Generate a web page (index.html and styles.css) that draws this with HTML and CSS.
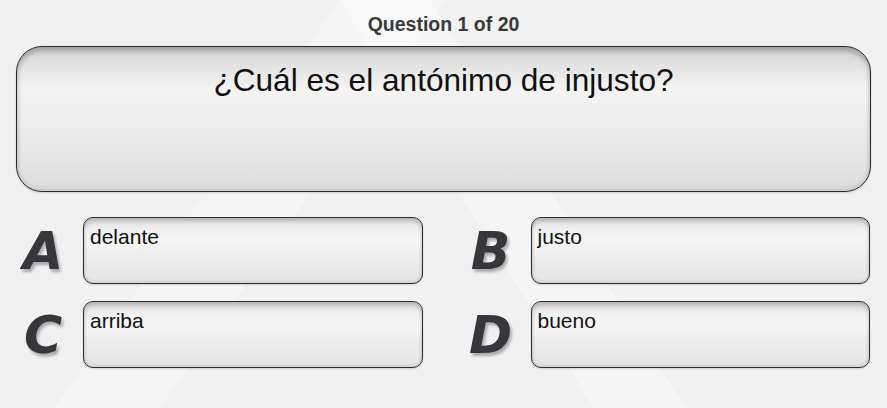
FILE: index.html
```html
<!DOCTYPE html>
<html>
	<head>
		<meta charset="utf-8">
		<title>Quiz</title>
		<link rel="stylesheet" href="styles.css">
	</head>
	<body>
		<div class="counter">Question 1 of 20</div>
		<div class="question">¿Cuál es el antónimo de injusto?</div>
		<div class="answers">
			<div class="answer">
				<span class="letter">A</span>
				<div class="answer_box">delante</div>
			</div>
			<div class="answer">
				<span class="letter">B</span>
				<div class="answer_box">justo</div>
			</div>
			<div class="answer">
				<span class="letter">C</span>
				<div class="answer_box">arriba</div>
			</div>
			<div class="answer">
				<span class="letter">D</span>
				<div class="answer_box">bueno</div>
			</div>
		</div>
	</body>
</html>
```

FILE: styles.css
```css
body {
    margin: 0;
    height: 408px;
    overflow: hidden;
    font-family: "Liberation Sans", Arial, sans-serif;
    background-color: #f1f1f1;
    /* faint watermark bands behind the answers */
    background-image:
        linear-gradient(58deg, transparent 52%, rgba(255,255,255,.35) 52%, rgba(255,255,255,.35) 60%, transparent 60%),
        linear-gradient(-55deg, transparent 62%, rgba(255,255,255,.3) 62%, rgba(255,255,255,.3) 71%, transparent 71%);
}
.counter {
    padding-top: 13px;
    height: 46px;
    box-sizing: border-box;
    text-align: center;
    font-size: 19.5px;
    line-height: 22px;
    font-weight: bold;
    color: #3a3a3a;
}
/* big rounded question panel */
.question {
    margin: 0 16px;
    height: 146px;
    box-sizing: border-box;
    padding-top: 16px;
    border: 1px solid #2a2a2a;
    border-radius: 26px;
    background: linear-gradient(#d3d3d3 0%, #e4e4e4 14%, #f5f4f3 30%, #ededed 50%, #e5e5e5 80%, #dcdcdc 100%);
    box-shadow: inset 0 4px 5px rgba(0,0,0,.25), inset 0 -3px 4px rgba(0,0,0,.08), 0 1px 2px rgba(0,0,0,.15);
    text-align: center;
    font-size: 31.6px;
    line-height: 34px;
    color: #111;
}
.answers {
    display: grid;
    grid-template-columns: 1fr 1fr;
    column-gap: 41px;
    row-gap: 17px;
    padding: 25px 17px 0 16px;
}
.answer {
    display: flex;
    align-items: center;
    gap: 13px;
}
.letter {
    width: 54px;
    text-align: center;
    font-family: "DejaVu Sans", Verdana, sans-serif;
    font-size: 52px;
    font-weight: bold;
    font-style: italic;
    color: #36373b;
    text-shadow: 2px 3px 3px rgba(0,0,0,.3);
}
.answer_box {
    flex: 1;
    height: 67px;
    box-sizing: border-box;
    padding: 7px 6px;
    border: 1px solid #2e2e2e;
    border-radius: 10px;
    background: linear-gradient(#dedede 0%, #f1f1f1 20%, #f6f5f4 35%, #ededed 60%, #e4e4e4 100%);
    box-shadow: inset 0 3px 4px rgba(0,0,0,.2), inset 0 -2px 3px rgba(0,0,0,.08), 0 1px 2px rgba(0,0,0,.15);
    font-size: 21px;
    line-height: 24px;
    color: #111;
}
```
